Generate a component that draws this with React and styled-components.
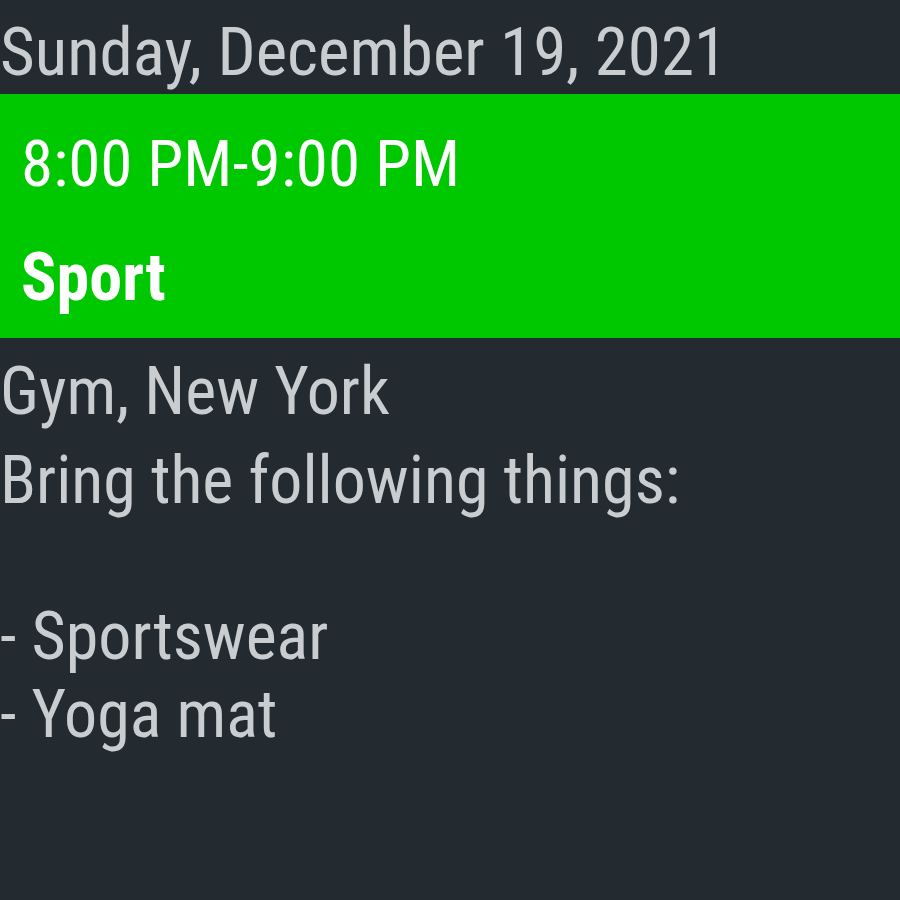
import styled, { createGlobalStyle } from "styled-components";

const Global = createGlobalStyle`
  html, body {
    margin: 0;
    padding: 0;
    background: #232b31;
  }
`;

const Screen = styled.div`
  width: 900px;
  height: 900px;
  overflow: hidden;
  background: #232b31;
  color: #c9cdcf;
  font-family: "Roboto Condensed", Roboto, sans-serif;
  font-size: 66px;
`;

const DateLine = styled.div`
  height: 94px;
  font-size: 67px;
  line-height: 104px;
  white-space: nowrap;
`;

const EventBlock = styled.div`
  background: #00c800;
  color: #ffffff;
  height: 244px;
  padding: 0 21px;
  box-sizing: border-box;
`;

const Time = styled.div`
  font-size: 65px;
  line-height: 140px;
`;

const Title = styled.div`
  font-weight: 700;
  line-height: 88px;
`;

const Details = styled.div`
  padding-top: 10px;
  line-height: 88px;
`;

const Notes = styled.div`
  margin-top: 6px;
  line-height: 78px;
  white-space: pre-line;
`;

export default function App() {
  return (
    <Screen>
      <Global />
      <DateLine>Sunday, December 19, 2021</DateLine>
      <EventBlock>
        <Time>8:00 PM-9:00 PM</Time>
        <Title>Sport</Title>
      </EventBlock>
      <Details>Gym, New York</Details>
      <Notes>{"Bring the following things:\n\n- Sportswear\n- Yoga mat"}</Notes>
    </Screen>
  );
}
